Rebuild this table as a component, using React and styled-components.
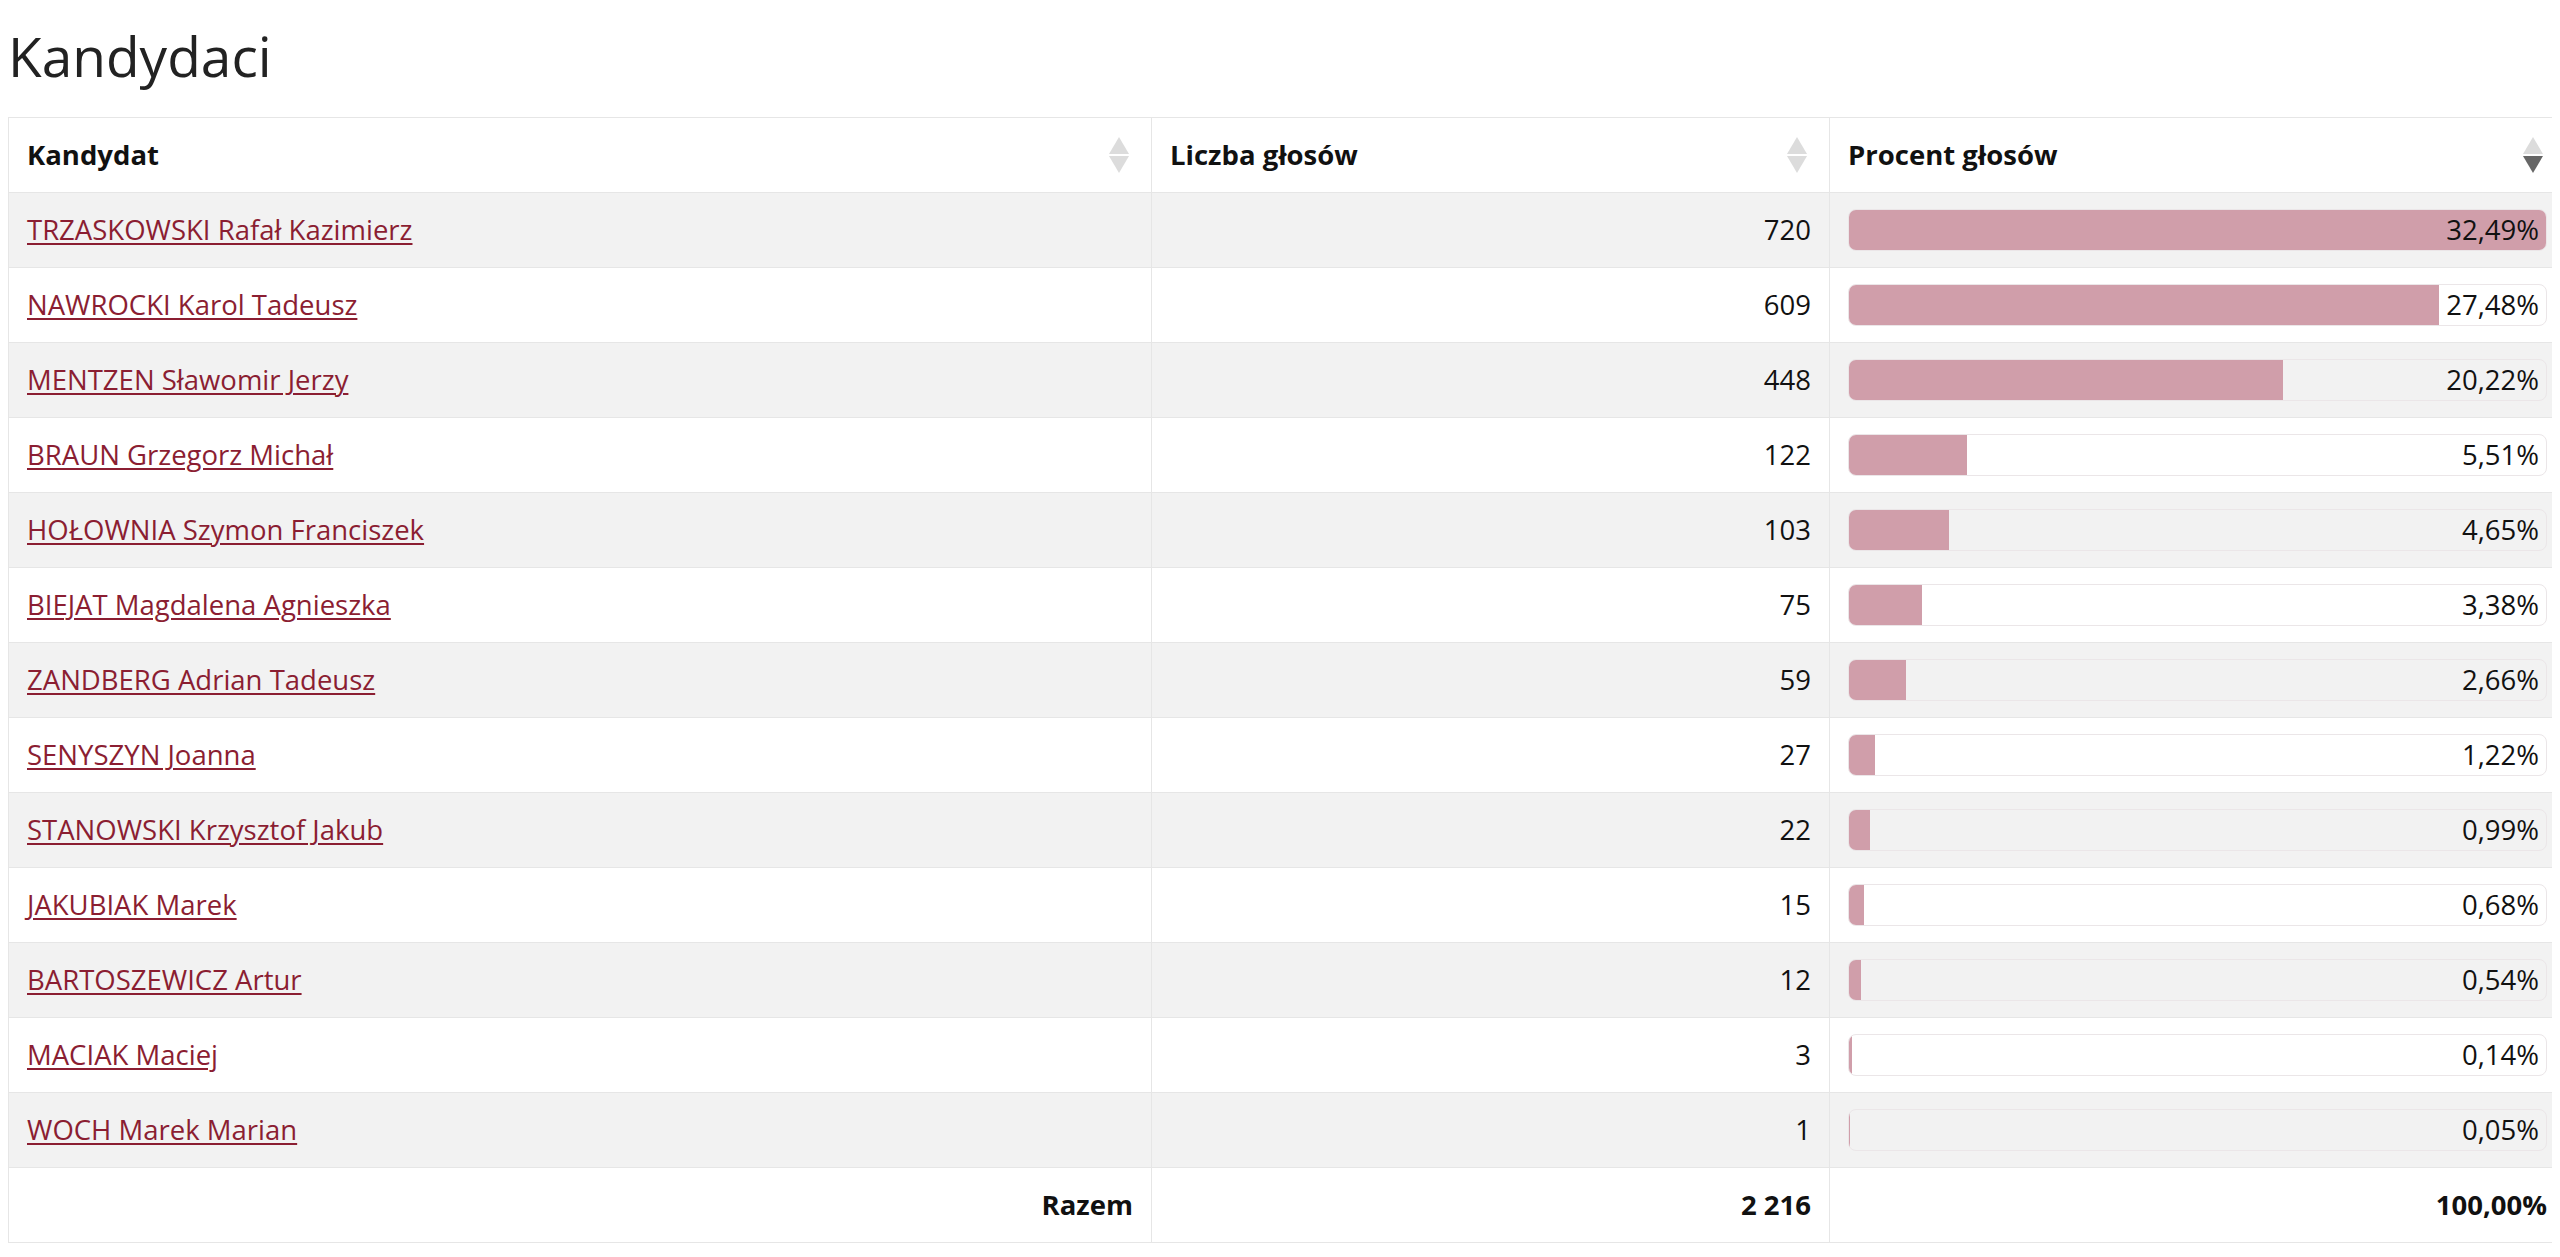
import React from 'react';
import styled, { createGlobalStyle } from 'styled-components';

const GlobalStyle = createGlobalStyle`
  body {
    margin: 8px;
    background: #fff;
    font-family: "Open Sans", "Noto Sans", sans-serif;
    color: #111;
    overflow-x: hidden;
  }
`;

const Title = styled.h1`
  font: 400 55px "Open Sans", sans-serif;
  color: #222;
  margin: 10px 0 24px 0;
`;

const Table = styled.table`
  width: 2557px;
  table-layout: fixed;
  border-collapse: collapse;
  border: 1px solid #e6e6e6;
  font-size: 27.5px;
`;

const HeadCell = styled.th`
  box-sizing: border-box;
  width: ${(p) => p.$w}px;
  padding: 16px 22px 16px 18px;
  border-left: 1px solid #e6e6e6;
  text-align: left;
  font-weight: 700;
  line-height: 42px;
  color: #111;
`;

const HeadInner = styled.div`
  display: flex;
  align-items: center;
  justify-content: space-between;
`;

const Row = styled.tr`
  background: ${(p) => (p.$striped ? '#f2f2f2' : '#fff')};
  border-top: 1px solid #e6e6e6;
`;

const Cell = styled.td`
  box-sizing: border-box;
  padding: 16px 18px;
  border-left: 1px solid #e6e6e6;
  line-height: 42px;
  text-align: ${(p) => (p.$right ? 'right' : 'left')};
  font-weight: ${(p) => (p.$bold ? 700 : 400)};
  color: #111;
  white-space: nowrap;
`;

const NameLink = styled.a`
  color: #8b1e32;
  text-decoration: underline;
  text-decoration-thickness: 2px;
  text-underline-offset: 3px;
  cursor: pointer;
`;

const Bar = styled.div`
  display: grid;
  height: 42px;
  box-sizing: border-box;
  border: 1px solid #ebe6e8;
  border-radius: 8px;
  overflow: hidden;
`;

const Fill = styled.div`
  grid-area: 1 / 1;
  height: 100%;
  background: #d09eaa;
`;

const BarLabel = styled.span`
  grid-area: 1 / 1;
  justify-self: end;
  padding-right: 7px;
  line-height: 40px;
  color: #111;
`;

function SortIcon({ active }) {
  return (
    <svg width="20" height="36" viewBox="0 0 20 36">
      <polygon points="10,0 20,17 0,17" fill="#dcdcdc" />
      <polygon points="0,19 20,19 10,36" fill={active ? '#666' : '#dcdcdc'} />
    </svg>
  );
}

const rows = [
  ['TRZASKOWSKI Rafał Kazimierz', '720', 32.49],
  ['NAWROCKI Karol Tadeusz', '609', 27.48],
  ['MENTZEN Sławomir Jerzy', '448', 20.22],
  ['BRAUN Grzegorz Michał', '122', 5.51],
  ['HOŁOWNIA Szymon Franciszek', '103', 4.65],
  ['BIEJAT Magdalena Agnieszka', '75', 3.38],
  ['ZANDBERG Adrian Tadeusz', '59', 2.66],
  ['SENYSZYN Joanna', '27', 1.22],
  ['STANOWSKI Krzysztof Jakub', '22', 0.99],
  ['JAKUBIAK Marek', '15', 0.68],
  ['BARTOSZEWICZ Artur', '12', 0.54],
  ['MACIAK Maciej', '3', 0.14],
  ['WOCH Marek Marian', '1', 0.05],
];

const max = 32.49;
const fmt = (n) => n.toFixed(2).replace('.', ',') + '%';

export default function App() {
  return (
    <>
      <GlobalStyle />
      <Title>Kandydaci</Title>
      <Table>
        <thead>
          <tr>
            <HeadCell $w={1143}>
              <HeadInner>Kandydat<SortIcon /></HeadInner>
            </HeadCell>
            <HeadCell $w={678}>
              <HeadInner>Liczba głosów<SortIcon /></HeadInner>
            </HeadCell>
            <HeadCell $w={736}>
              <HeadInner>Procent głosów<SortIcon active /></HeadInner>
            </HeadCell>
          </tr>
        </thead>
        <tbody>
          {rows.map(([name, votes, pct], i) => (
            <Row key={name} $striped={i % 2 === 0}>
              <Cell><NameLink>{name}</NameLink></Cell>
              <Cell $right>{votes}</Cell>
              <Cell>
                <Bar>
                  <Fill style={{ width: (pct / max) * 100 + '%' }} />
                  <BarLabel>{fmt(pct)}</BarLabel>
                </Bar>
              </Cell>
            </Row>
          ))}
        </tbody>
        <tfoot>
          <Row>
            <Cell $right $bold>Razem</Cell>
            <Cell $right $bold>2 216</Cell>
            <Cell $right $bold>100,00%</Cell>
          </Row>
        </tfoot>
      </Table>
    </>
  );
}
